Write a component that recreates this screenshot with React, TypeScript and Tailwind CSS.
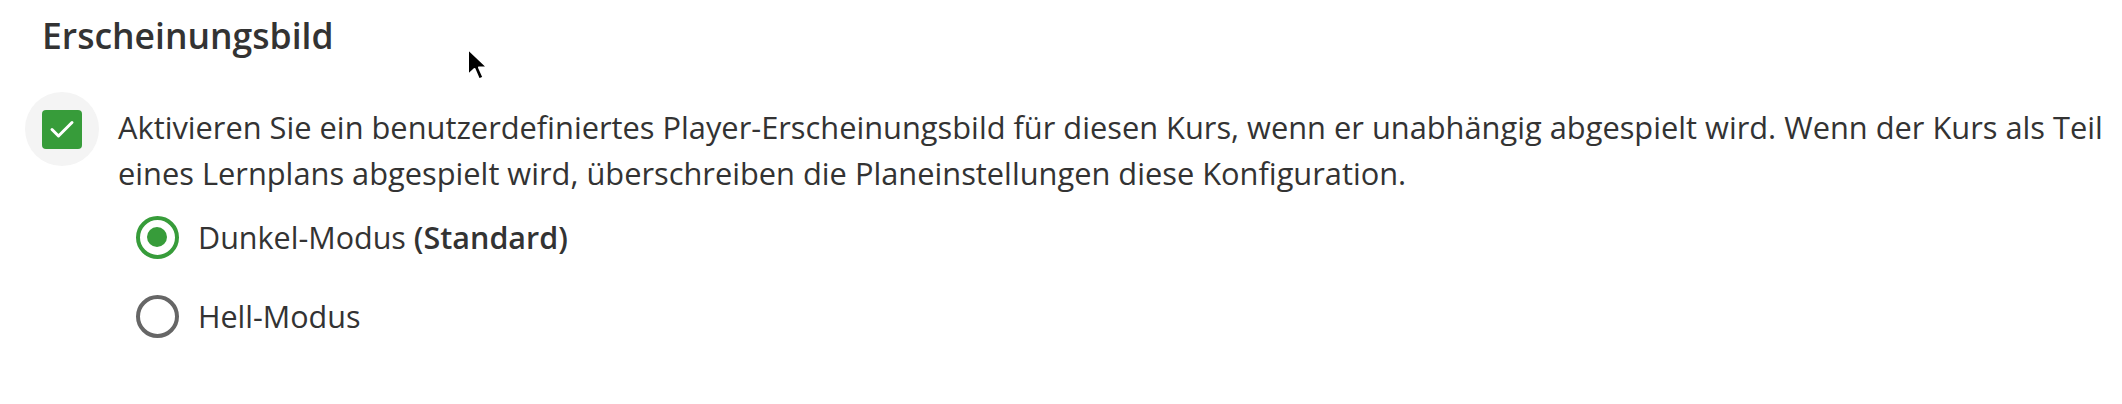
import { useState } from 'react';

type Mode = 'dark' | 'light';

export default function App() {
  const [custom, setCustom] = useState(true);
  const [mode, setMode] = useState<Mode>('dark');

  return (
    <div className="relative min-h-[404px] bg-white pl-[42px] pt-[11px] font-['Open_Sans',sans-serif] text-[#333333]">
      <h2 className="text-[35.5px] leading-[48px] font-semibold">Erscheinungsbild</h2>

      {/* Custom appearance toggle */}
      <label className="mt-[33px] flex items-start cursor-pointer">
        <span className="-ml-[17px] flex h-[74px] w-[74px] shrink-0 items-center justify-center rounded-full bg-[#f4f4f4]">
          <input
            type="checkbox"
            className="sr-only"
            checked={custom}
            onChange={(e) => setCustom(e.target.checked)}
          />
          <span
            className={`flex h-[39px] w-[40px] items-center justify-center rounded-[4px] ${
              custom ? 'bg-[#379c3a]' : 'border-[3px] border-[#666666] bg-white'
            }`}
          >
            {custom && (
              <svg width="26" height="20" viewBox="0 0 26 20" fill="none">
                <path d="M3 10.5 L9.5 17 L23 3.5" stroke="white" strokeWidth="3" strokeLinecap="round" strokeLinejoin="round" />
              </svg>
            )}
          </span>
        </span>
        <span className="ml-[19px] mt-[12px] pr-[6px] text-[30.8px] leading-[46px]">
          Aktivieren Sie ein benutzerdefiniertes Player-Erscheinungsbild für diesen Kurs, wenn er unabhängig abgespielt
          wird. Wenn der Kurs als Teil eines Lernplans abgespielt wird, überschreiben die Planeinstellungen diese
          Konfiguration.
        </span>
      </label>

      {/* Theme choice */}
      <div role="radiogroup" className="ml-[78px] mt-[4px] flex flex-col gap-[5px]">
        <Radio checked={mode === 'dark'} onSelect={() => setMode('dark')}>
          Dunkel-Modus <span className="font-semibold">(Standard)</span>
        </Radio>
        <Radio checked={mode === 'light'} onSelect={() => setMode('light')}>
          Hell-Modus
        </Radio>
      </div>

      {/* pointer */}
      <svg className="pointer-events-none absolute left-[466px] top-[47px]" width="24" height="36" viewBox="0 0 24 36">
        <path
          d="M2 2 L2 28 L8.5 22 L13 32.5 L17.5 30.5 L13 20.5 L21.5 20.5 Z"
          fill="black"
          stroke="white"
          strokeWidth="2"
          strokeLinejoin="round"
        />
      </svg>
    </div>
  );
}

function Radio({
  checked,
  onSelect,
  children,
}: {
  checked: boolean;
  onSelect: () => void;
  children: React.ReactNode;
}) {
  return (
    <label className="flex items-center cursor-pointer" onClick={onSelect}>
      <span className="flex h-[74px] w-[74px] shrink-0 items-center justify-center">
        <span
          className={`flex h-[43px] w-[43px] items-center justify-center rounded-full border-[4px] ${
            checked ? 'border-[#379c3a]' : 'border-[#666666]'
          }`}
        >
          {checked && <span className="h-[20px] w-[20px] rounded-full bg-[#379c3a]" />}
        </span>
      </span>
      <span className="ml-[4px] text-[30.5px] leading-[46px]">{children}</span>
    </label>
  );
}
